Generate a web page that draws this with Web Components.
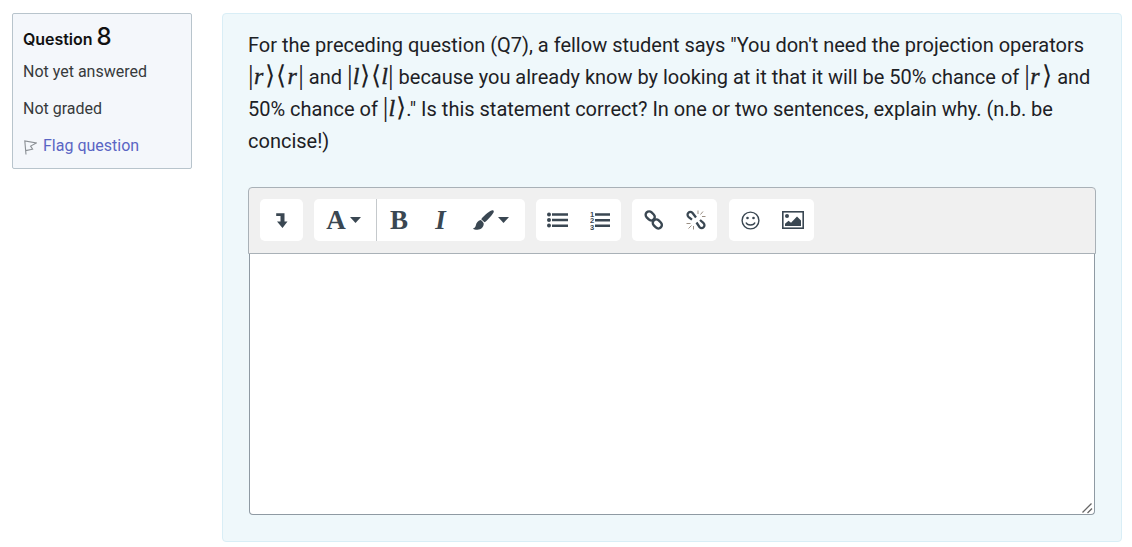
<!DOCTYPE html>
<html lang="en">
<head>
<meta charset="utf-8">
<title>Question 8</title>
<style>
  html, body { margin: 0; background: #fff; }
  body { font-family: Roboto, "Liberation Sans", sans-serif; color: #1d2125; }
</style>
</head>
<body>
<quiz-page>
  <question-info slot="info" number="8">
    <span slot="state">Not yet answered</span>
    <span slot="grade">Not graded</span>
    <span slot="flag">Flag question</span>
  </question-info>
  <question-card slot="main">
    <span slot="text">For the preceding question (Q7), a fellow student says "You don't need the projection operators
      <math-term bra="r" ket="r"></math-term> and <math-term bra="l" ket="l"></math-term> because you already know by looking at it that it will be 50% chance of
      <math-term ket="r"></math-term> and 50% chance of <math-term ket="l"></math-term>." Is this statement correct? In one or two sentences, explain why. (n.b. be concise!)</span>
    <rich-editor slot="answer"></rich-editor>
  </question-card>
</quiz-page>

<script>
// Page frame: info column on the left, question on the right.
customElements.define('quiz-page', class extends HTMLElement {
  constructor () {
    super()
    this.attachShadow({ mode: 'open' }).innerHTML = `
      <style>
        :host { display: flex; align-items: flex-start; gap: 30px; padding: 13px 10px 5px 12px; }
      </style>
      <slot name="info"></slot>
      <slot name="main"></slot>`
  }
})

customElements.define('question-info', class extends HTMLElement {
  constructor () {
    super()
    this.attachShadow({ mode: 'open' }).innerHTML = `
      <style>
        :host { display: block; box-sizing: border-box; width: 180px; height: 156px; flex: none;
          padding: 10px; background: #f4f7fb; border: 1px solid #b8c4cc; border-radius: 2px;
          font-size: 16px; color: #373a3c; }
        h3 { margin: 0; height: 29px; display: flex; align-items: baseline; gap: 4px;
          font: 600 16px/26px Inter, sans-serif; color: #111; letter-spacing: -.05px; }
        h3 b { font: 500 24px/26px Inter, sans-serif; }
        .row { height: 37px; line-height: 37px; }
        .flag { display: flex; align-items: center; gap: 6px; color: #5a65c4; }
        svg { width: 13px; height: 15px; margin: 3px 0 0 1px; }
      </style>
      <h3>Question <b>${this.getAttribute('number')}</b></h3>
      <div class="row"><slot name="state"></slot></div>
      <div class="row"><slot name="grade"></slot></div>
      <div class="row flag">
        <svg viewBox="0 0 13 15" fill="none" stroke="#8a8f94" stroke-width="1.1"><path d="M2 14.500 .8 .9 12.400 3 6.600 6.100 8.600 9.200 1.700 10.600"/></svg>
        <slot name="flag"></slot>
      </div>`
  }
})

customElements.define('question-card', class extends HTMLElement {
  constructor () {
    super()
    this.attachShadow({ mode: 'open' }).innerHTML = `
      <style>
        :host { display: block; box-sizing: border-box; width: 900px; height: 529px; flex: none;
          padding: 15px 25px 26px; background: #eff8fb; border: 1px solid #d9eef6; border-radius: 4px;
          font-size: 20px; line-height: 32px; color: #1d2125; }
        p { margin: 0 0 30px; }
      </style>
      <p><slot name="text"></slot></p>
      <slot name="answer"></slot>`
  }
})

// Bra and ket notation set in a serif italic, as the reference's math renderer does.
customElements.define('math-term', class extends HTMLElement {
  constructor () {
    super()
    const ket = this.getAttribute('ket')
    const bra = this.getAttribute('bra')
    this.attachShadow({ mode: 'open' }).innerHTML = `
      <style>
        :host { display: inline-block; white-space: nowrap; color: #1d2125;
          font: 28px/0 "Liberation Serif", serif; }
        i { font: italic 400 24px/0 "Liberation Serif", serif; -webkit-text-stroke: .35px #1d2125; padding: 0 1.5px 0 .5px; }
        i.l { padding: 0; }
        .ang { font: 200 26px/0 "DejaVu Sans", sans-serif; padding: 0 .5px; }
      </style>
      |<i class="${ket}">${ket}</i><span class="ang">⟩</span>${bra ? `<span class="ang">⟨</span><i class="${bra}">${bra}</i>|` : ''}`
  }
})

// Toolbar pieces.
customElements.define('tool-group', class extends HTMLElement {
  constructor () {
    super()
    this.attachShadow({ mode: 'open' }).innerHTML = `
      <style>
        :host { display: flex; height: 42px; background: #fff; border-radius: 5px; flex: none; }
      </style>
      <slot></slot>`
  }
})

customElements.define('tool-button', class extends HTMLElement {
  constructor () {
    super()
    this.attachShadow({ mode: 'open' }).innerHTML = `
      <style>
        :host { display: flex; box-sizing: border-box; align-items: center; justify-content: center; gap: 4px;
          height: 42px; width: var(--w, 43px); padding-right: var(--pr, 0); flex: none; color: #3a4752;
          font: 700 27px/42px "Liberation Serif", serif; }
        :host([sep]) { border-right: 1px solid #c5c9cc; }
        :host([em]) { font-style: italic; }
        ::slotted(svg) { display: block; fill: #3a4752; }
      </style>
      <slot></slot>`
  }
})

customElements.define('rich-editor', class extends HTMLElement {
  constructor () {
    super()
    const caret = '<svg width="11" height="6" viewBox="0 0 11 6"><path d="M0 0h11L5.500 6z"/></svg>'
    this.attachShadow({ mode: 'open' }).innerHTML = `
      <style>
        :host { display: block; width: 848px; }
        .bar { box-sizing: border-box; height: 67px; display: flex; gap: 11px; padding: 11px;
          background: #f0f0f0; border: 1px solid #a9b1b7; border-radius: 4px 4px 0 0; }
        .bar tool-group:last-child { margin-left: 1px; }
        .area { position: relative; margin: 0 1px; }
        textarea { display: block; box-sizing: border-box; width: 846px; height: 261px;
          padding: 4px; border: 1px solid #8f9aa3; border-top: 0; border-radius: 0 0 4px 4px;
          background: #fff; outline: 0; resize: none; font: inherit; }
        .grip { position: absolute; right: 2px; bottom: 1px; }
      </style>
      <div class="bar">
        <tool-group>
          <tool-button>
            <svg width="12" height="15" viewBox="0 0 12 15"><path d="M.2 .3h8.300v8.200h3L6.500 15 1 8.500h3.500V3H.2z"/></svg>
          </tool-button>
        </tool-group>
        <tool-group>
          <tool-button sep style="--w:63px;--pr:3px"><span>A</span>${caret}</tool-button>
          <tool-button style="--w:44px">B</tool-button>
          <tool-button em style="--w:42px;--pr:3px">I</tool-button>
          <tool-button style="--w:62px;--pr:6px">
            <svg width="21" height="20" viewBox="0 0 21 20"><path d="M19.500 .2c.7 0 1.300.5 1.300 1.200 0 .9-1.400 3-3.200 5-2 2.300-4.600 5-6.100 5.800L8.200 9.200c1-1.600 3.900-4.400 6.200-6.200C16.300 1.500 18.500.2 19.500 .2zM7.400 10c1.500.6 2.900 2 3.300 3.600.2 3.500-2.800 6.200-6.300 6.200-2 0-4.200-.7-4.400-1.400 1.600-.6 2.500-1.400 2.800-3 .5-2.600 2.300-4.700 4.600-5.400z"/></svg>
            ${caret}
          </tool-button>
        </tool-group>
        <tool-group>
          <tool-button>
            <svg width="21" height="16" viewBox="0 0 21 16"><circle cx="2" cy="2.400" r="2"/><circle cx="2" cy="8" r="2"/><circle cx="2" cy="13.600" r="2"/><path d="M5 1.200h16v2.500H5zM5 6.800h16v2.500H5zM5 12.400h16v2.500H5z"/></svg>
          </tool-button>
          <tool-button style="--w:42px">
            <svg width="20" height="20" viewBox="0 0 20 20"><path d="M5 3.200h15v2.500H5zM5 9h15v2.500H5zM5 14.500h15V17H5z"/><text x="0" y="6.500" font-size="7.500" font-weight="700" font-family="Liberation Sans">1</text><text x="0" y="13" font-size="7.500" font-weight="700" font-family="Liberation Sans">2</text><text x="0" y="19.500" font-size="7.500" font-weight="700" font-family="Liberation Sans">3</text></svg>
          </tool-button>
        </tool-group>
        <tool-group>
          <tool-button>
            <svg width="20" height="20" viewBox="0 0 20 20" style="fill:none"><g stroke="#3a4752" stroke-width="2.400" fill="none"><rect x="1.200" y="2.400" width="10" height="7" rx="3.500" transform="rotate(45 6.200 5.900)"/><rect x="8.300" y="10.400" width="10" height="7" rx="3.500" transform="rotate(45 13.300 13.900)"/></g></svg>
          </tool-button>
          <tool-button style="--w:42px">
            <svg width="20" height="20" viewBox="0 0 20 20" style="fill:none"><g fill="none" stroke="#3a4752" stroke-width="2.300"><path d="M10 7.500 6.400 2.800a2.800 2.800 0 0 0-4 0 2.800 2.800 0 0 0 0 4L6 9.600M10.500 12.500l3.100 4.700a2.800 2.800 0 0 0 4 0 2.800 2.800 0 0 0 0-4L14 10"/></g><g stroke="#9a8f84" stroke-width="1"><path d="M12 .5v3.500M17 1.500 14.500 4.500M19.500 6.500H16M.5 13.500h4M2.500 18.500 5.500 15.500M7.500 19.500v-3.500"/></g></svg>
          </tool-button>
        </tool-group>
        <tool-group>
          <tool-button>
            <svg width="19" height="19" viewBox="0 0 19 19" style="fill:none"><circle cx="9.500" cy="9.500" r="8.400" fill="none" stroke="#3a4752" stroke-width="1.400"/><circle cx="6.500" cy="7" r="1.300" fill="#3a4752"/><circle cx="12.500" cy="7" r="1.300" fill="#3a4752"/><path d="M5 11.500c1.200 3.300 7.800 3.300 9 0" fill="none" stroke="#3a4752" stroke-width="1.400"/></svg>
          </tool-button>
          <tool-button style="--w:42px">
            <svg width="22" height="18" viewBox="0 0 22 18" style="fill:none"><rect x=".8" y=".8" width="20.400" height="16.400" fill="none" stroke="#3a4752" stroke-width="1.600"/><circle cx="5" cy="5" r="2" fill="#3a4752"/><path d="M3 15v-2.200l3.500-3 2.500 2 6-6.300 4 4V15z" fill="#3a4752"/></svg>
          </tool-button>
        </tool-group>
      </div>
      <div class="area">
        <textarea aria-label="Answer"></textarea>
        <svg class="grip" width="11" height="11" viewBox="0 0 11 11" fill="none" stroke="#666" stroke-width="1.300"><path d="M.5 9.500 9.500.5M5.500 10 10 5.500"/></svg>
      </div>`
  }
})
</script>
</body>
</html>
